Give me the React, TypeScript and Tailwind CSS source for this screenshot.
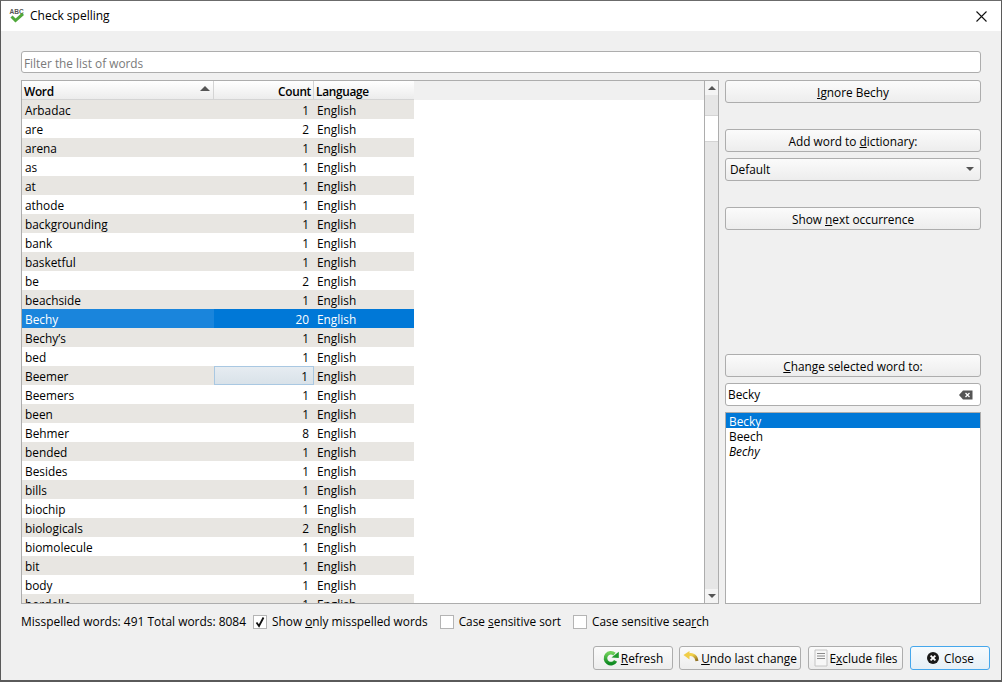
import { ReactNode } from "react";

const rows: [string, number][] = [
  ["Arbadac", 1],
  ["are", 2],
  ["arena", 1],
  ["as", 1],
  ["at", 1],
  ["athode", 1],
  ["backgrounding", 1],
  ["bank", 1],
  ["basketful", 1],
  ["be", 2],
  ["beachside", 1],
  ["Bechy", 20],
  ["Bechy’s", 1],
  ["bed", 1],
  ["Beemer", 1],
  ["Beemers", 1],
  ["been", 1],
  ["Behmer", 8],
  ["bended", 1],
  ["Besides", 1],
  ["bills", 1],
  ["biochip", 1],
  ["biologicals", 2],
  ["biomolecule", 1],
  ["bit", 1],
  ["body", 1],
  ["bordello", 1],
];

function SideButton({ children }: { children: ReactNode }) {
  return (
    <button className="h-[23px] w-full rounded-[3px] border border-[#adadad] bg-gradient-to-b from-[#fbfbfb] to-[#ededed] text-center leading-[22px] text-black">
      {children}
    </button>
  );
}

function FooterButton({ icon, width, focused, children }: { icon: ReactNode; width: string; focused?: boolean; children: ReactNode }) {
  return (
    <button
      className={`flex h-[24px] items-center justify-center gap-[2px] rounded-[3px] border bg-gradient-to-b ${width} ${
        focused ? "border-[#45a7ec] from-[#f6fafd] to-[#e6eff6]" : "border-[#adadad] from-[#fbfbfb] to-[#ededed]"
      }`}
    >
      {icon}
      <span className="pt-[1px]">{children}</span>
    </button>
  );
}

function Check({ checked, label }: { checked?: boolean; label: ReactNode }) {
  return (
    <label className="flex items-center gap-[5px]">
      <span className="flex h-[14px] w-[14px] items-center justify-center border border-[#b4b4b4] bg-white">
        {checked && (
          <svg width="12" height="12" viewBox="0 0 12 12">
            <path d="M2.5 6.5 L5 10 L9.5 1.5" fill="none" stroke="#111" strokeWidth="1.8" />
          </svg>
        )}
      </span>
      <span>{label}</span>
    </label>
  );
}

export default function App() {
  return (
    <div
      className="flex h-[682px] w-[1002px] flex-col overflow-hidden border border-b-2 border-[#5a5a5a] border-t-[#6b6b6b] bg-[#f0f0f0] text-[11.85px] text-black"
      style={{ fontFamily: '"Open Sans", "Noto Sans", sans-serif' }}
    >
      {/* title bar */}
      <div className="flex h-[30px] items-center bg-white pl-[8px] pr-[14px]">
        <svg width="16" height="16" viewBox="0 0 16 16" className="shrink-0">
          <text x="0.5" y="5.5" fontSize="6.5" fontWeight="700" fontFamily="Liberation Sans" fill="#555">ABC</text>
          <path d="M2.5 8.5 L6.5 12.5 L14 5.8" fill="none" stroke="#4fa83a" strokeWidth="3" />
        </svg>
        <span className="ml-[5px] grow text-[12px]">Check spelling</span>
        <svg width="11" height="11" viewBox="0 0 11 11">
          <path d="M0.5 0.5 L10.5 10.5 M10.5 0.5 L0.5 10.5" stroke="#111" strokeWidth="1.1" />
        </svg>
      </div>

      <div className="flex grow flex-col px-[20px] pt-[20px]">
        <input
          readOnly
          placeholder="Filter the list of words"
          className="h-[22px] w-[960px] rounded-[3px] border border-[#adadad] bg-white px-[2px] pt-[2px] text-[11.85px] outline-none placeholder:text-[#7a7a7a]"
        />

        <div className="mt-[7px] flex h-[524px] gap-[6px]">
          {/* word table */}
          <div className="flex w-[698px] border border-[#adadad] bg-white">
            <div className="relative grow overflow-hidden">
              <div className="flex h-[19px] bg-[#f0f0f0] font-semibold tracking-[-0.3px]">
                <div className="relative flex w-[192px] items-center border-b border-r border-[#d4d4d4] bg-gradient-to-b from-white to-[#ececec] pl-[2px] pt-[3px]">
                  Word
                  <span className="absolute right-[3px] top-[5px] h-0 w-0 border-x-[5px] border-b-[5px] border-x-transparent border-b-[#555]" />
                </div>
                <div className="flex w-[100px] items-center justify-end border-b border-r border-[#d4d4d4] bg-gradient-to-b from-white to-[#ececec] pr-[2px] pt-[3px]">
                  Count
                </div>
                <div className="flex w-[100px] items-center border-b border-[#d4d4d4] bg-gradient-to-b from-white to-[#ececec] pl-[2px] pt-[3px]">
                  Language
                </div>
              </div>
              {rows.map(([word, count], i) => {
                const selected = word === "Bechy";
                const bg = selected ? "bg-[#0078d7] text-white" : i % 2 === 0 ? "bg-[#e8e6e2]" : "bg-white";
                return (
                  <div key={word} className={`flex h-[19px] w-[392px] items-center leading-[21px] ${bg}`}>
                    <div className={`h-full w-[192px] pl-[3px] ${selected ? "bg-[#1a85dc]" : ""}`}>{word}</div>
                    <div
                      className={`h-full w-[100px] pr-[5px] text-right ${
                        word === "Beemer" ? "border border-[#a9c8e2] bg-gradient-to-b from-[#e6ecf1] to-[#d9e2e9] pr-[4px] leading-[19px]" : ""
                      }`}
                    >
                      {count}
                    </div>
                    <div className="h-full pl-[3px]">English</div>
                  </div>
                );
              })}
            </div>
            {/* scrollbar */}
            <div className="flex w-[14px] shrink-0 flex-col border-l border-[#adadad] bg-[#e6e6e6]">
              <div className="flex h-[14px] items-center justify-center bg-[#f4f4f4]">
                <span className="h-0 w-0 border-x-[4px] border-b-[4px] border-x-transparent border-b-[#555]" />
              </div>
              <div className="mt-[20px] h-[27px] border-y border-[#d4d4d4] bg-white" />
              <div className="grow" />
              <div className="flex h-[14px] items-center justify-center bg-[#f4f4f4]">
                <span className="h-0 w-0 border-x-[4px] border-t-[4px] border-x-transparent border-t-[#555]" />
              </div>
            </div>
          </div>

          {/* right column */}
          <div className="flex w-[256px] flex-col">
            <SideButton><u>I</u>gnore Bechy</SideButton>
            <div className="mt-[26px]">
              <SideButton>Add word to <u>d</u>ictionary:</SideButton>
            </div>
            <div className="relative mt-[6px] flex h-[23px] items-center rounded-[3px] border border-[#adadad] bg-gradient-to-b from-[#fbfbfb] to-[#ededed] pl-[4px]">
              Default
              <span className="absolute right-[6px] top-[8px] h-0 w-0 border-x-[4px] border-t-[4px] border-x-transparent border-t-[#555]" />
            </div>
            <div className="mt-[26px]">
              <SideButton>Show <u>n</u>ext occurrence</SideButton>
            </div>
            <div className="mt-[124px]">
              <SideButton><u>C</u>hange selected word to:</SideButton>
            </div>
            <div className="mt-[6px] flex h-[23px] items-center justify-between rounded-[3px] border border-[#adadad] bg-white pl-[2px] pr-[7px]">
              Becky
              <svg width="14" height="10" viewBox="0 0 14 10">
                <path d="M4 0.5 H13.5 V9.5 H4 L0 5 Z" fill="#555" />
                <path d="M6.5 3 L10.5 7 M10.5 3 L6.5 7" stroke="#fff" strokeWidth="1.3" />
              </svg>
            </div>
            <div className="mt-[6px] grow border border-[#adadad] bg-white">
              <div className="h-[15px] bg-[#0078d7] pl-[3px] leading-[16px] text-white">Becky</div>
              <div className="h-[15px] pl-[3px] leading-[16px]">Beech</div>
              <div className="h-[15px] pl-[3px] italic leading-[16px]">Bechy</div>
            </div>
          </div>
        </div>

        {/* status row */}
        <div className="mt-[9px] flex h-[17px] items-center">
          <span className="text-[11.95px]">Misspelled words: 491 Total words: 8084</span>
          <span className="ml-[7px]"><Check checked label={<>Show <u>o</u>nly misspelled words</>} /></span>
          <span className="ml-[12px]"><Check label={<>Case <u>s</u>ensitive sort</>} /></span>
          <span className="ml-[12px]"><Check label={<>Case sensitive sea<u>r</u>ch</>} /></span>
        </div>

        {/* footer buttons */}
        <div className="mr-[-9px] mt-[16px] flex justify-end gap-[7px]">
          <FooterButton
            width="w-[80px] mr-[-1px]"
            icon={
              <svg width="16" height="16" viewBox="0 0 16 16">
                <defs>
                  <linearGradient id="refresh-green" x1="0" y1="0" x2="0" y2="1">
                    <stop offset="0" stopColor="#6fd05a" />
                    <stop offset="1" stopColor="#0f8a22" />
                  </linearGradient>
                </defs>
                <path d="M11.5 4.2 A5.4 5.4 0 1 0 12.6 10.8" fill="none" stroke="url(#refresh-green)" strokeWidth="3.6" />
                <path d="M8.5 7.5 L15.8 1.8 V8 Z" fill="#1f9a2c" />
              </svg>
            }
          >
            <u>R</u>efresh
          </FooterButton>
          <FooterButton
            width="w-[122px]"
            icon={
              <svg width="16" height="16" viewBox="0 0 16 16">
                <defs>
                  <linearGradient id="undo-yellow" x1="0" y1="0" x2="1" y2="1">
                    <stop offset="0.3" stopColor="#f2d04a" />
                    <stop offset="1" stopColor="#8a6a20" />
                  </linearGradient>
                </defs>
                <path d="M4 5.5 C8 3.5 13 4.5 14 11" fill="none" stroke="url(#undo-yellow)" strokeWidth="3" />
                <path d="M0.5 5 L6.5 1 V9.5 Z" fill="#f0cd48" />
              </svg>
            }
          >
            <u>U</u>ndo last change
          </FooterButton>
          <FooterButton
            width="w-[95px]"
            icon={
              <svg width="14" height="18" viewBox="0 0 14 18">
                <path d="M1 1 H13 V17 H1 Z" fill="#f7f7f7" stroke="#c4c4c4" />
                <path d="M3 4.5 H11 M3 7 H11 M3 9.5 H11" stroke="#8a8a8a" />
              </svg>
            }
          >
            E<u>x</u>clude files
          </FooterButton>
          <FooterButton
            width="w-[80px]"
            focused
            icon={
              <svg width="14" height="14" viewBox="0 0 14 14" className="mr-[2px]">
                <circle cx="7" cy="7" r="6" fill="#1a1a1a" />
                <path d="M4.6 4.6 L9.4 9.4 M9.4 4.6 L4.6 9.4" stroke="#fff" strokeWidth="1.8" />
              </svg>
            }
          >
            Close
          </FooterButton>
        </div>
      </div>
    </div>
  );
}
